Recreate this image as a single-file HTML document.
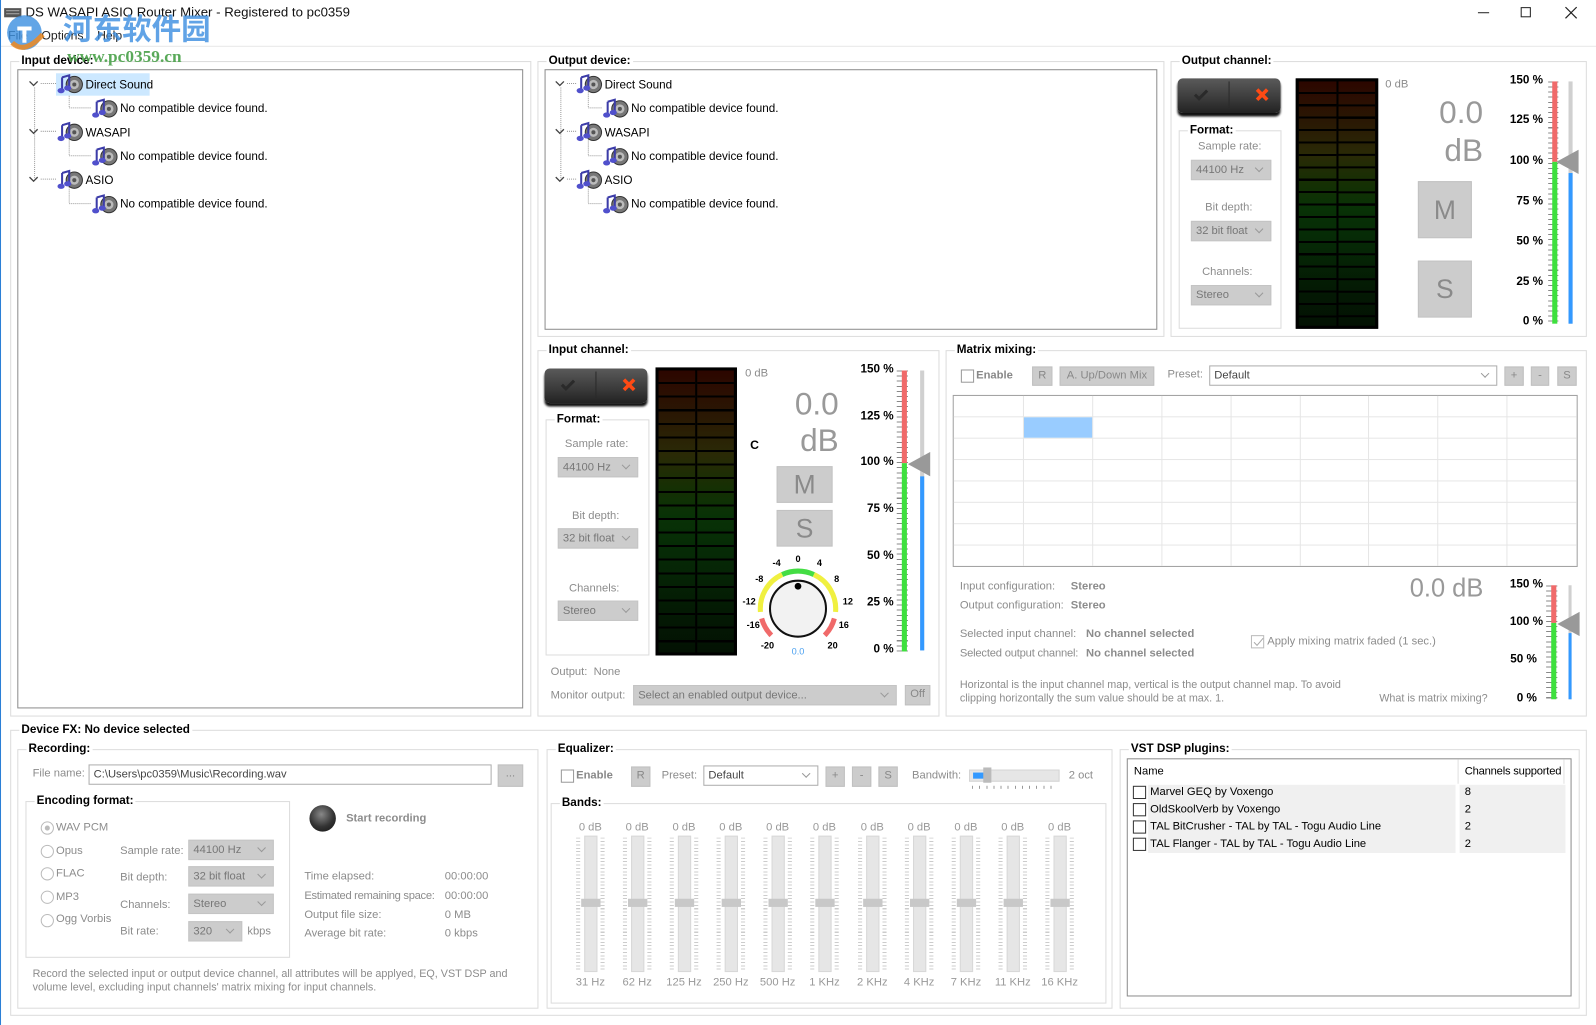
<!DOCTYPE html>
<html><head><meta charset="utf-8"><style>
*{margin:0;padding:0;box-sizing:border-box}
html,body{width:1596px;height:1025px;overflow:hidden;background:#fff}
#w{position:absolute;left:0;top:0;width:1568px;height:1007px;transform:scale(1.01786);transform-origin:0 0;font-family:"Liberation Sans","Noto Sans CJK SC",sans-serif;font-size:11px;color:#000}
.a{position:absolute;white-space:nowrap}
.g{position:absolute;border:1px solid #dcdcdc}
.gl{position:absolute;top:-8px;left:8px;background:#fff;padding:0 2px;font-weight:bold;font-size:11.5px;line-height:14px}
.gr{color:#8c8c8c}
.sel{position:absolute;background:#cccccc;border:1px solid #c4c4c4;color:#777;padding-left:4px;line-height:18px;height:20px;font-size:11px}
.sel:after{content:"";position:absolute;right:8px;top:4px;width:5px;height:5px;border-right:1px solid #999;border-bottom:1px solid #999;transform:rotate(45deg)}
.ws{background:#fff;border:1px solid #adadad;color:#444}
.ws:after{display:none}.sel.ws.p:after{display:block}
.b{position:absolute;background:#ccc;border:1px solid #c0c0c0;color:#888;text-align:center;font-size:11px;line-height:17px}
.cb{position:absolute;width:13px;height:13px;border:1px solid #999;background:#fff}
.rd{position:absolute;width:13px;height:13px;border:1px solid #bbb;border-radius:50%;background:#fff}
.tree{position:absolute;border:1px solid #8c8c8c;background:#fff}
.met{position:absolute;background:#000;border:3px solid #000}
.met i{position:absolute;top:0;bottom:0;width:calc(50% - 1px);background:repeating-linear-gradient(to bottom,transparent 0,transparent calc(var(--s) - 2px),#000 calc(var(--s) - 2px),#000 var(--s)),linear-gradient(to bottom,#2c0600,#2a1a04 18%,#2a2a06 30%,#153004 42%,#083206 52%,#062a06 65%,#041a04 85%,#031203)}
.tg{position:absolute;width:101px;height:34px;border-radius:5px;background:linear-gradient(#5a5a5a,#3a3a3a 60%,#222);box-shadow:0 3px 2px #111}
.tg:before{content:"";position:absolute;left:50px;top:3px;width:1px;height:27px;background:#2a2a2a}
.big{position:absolute;color:#999;font-size:31px;text-align:right;line-height:34px}
.ms{position:absolute;background:#ccc;border:1px solid #c2c2c2;color:#8a8a8a;font-size:26px;text-align:center}
.sl{position:absolute;font-weight:bold;font-size:11.5px;text-align:right}
.tk{position:absolute;background:repeating-linear-gradient(to bottom,#888 0,#888 1px,transparent 1px,transparent 5px)}
.eq{position:absolute;top:807px;width:46px;height:170px}
.eq .d{position:absolute;left:0;width:46px;top:0;text-align:center;color:#999;font-size:11px}
.eq .h{position:absolute;left:0;width:46px;top:152px;text-align:center;color:#999;font-size:11px}
.eq .tr{position:absolute;left:17px;top:14px;width:13px;height:134px;background:#e6e6e6;border:1px solid #d8d8d8}
.eq .th{position:absolute;left:14px;top:76px;width:19px;height:8px;background:#c8c8c8}
.eq .l,.eq .r{position:absolute;top:16px;width:4px;height:130px;background:repeating-linear-gradient(to bottom,#ccc 0,#ccc 1px,transparent 1px,transparent 3.3px)}
.eq .l{left:9px}.eq .r{left:33px}
.vc{position:absolute;top:389px;width:1px;height:167px;background:#e6e6e6}
.hr{position:absolute;left:937px;width:612px;height:1px;background:#e6e6e6}
</style></head><body><div id="w">

<!-- title -->
<svg class="a" style="left:4px;top:7px" width="18" height="12"><rect x="0" y="1" width="17" height="9" fill="#555"/><rect x="2" y="3" width="13" height="1" fill="#aaa"/><rect x="2" y="6" width="13" height="1" fill="#aaa"/></svg>
<div class="a" style="left:25px;top:4px;font-size:13px;color:#111">DS WASAPI ASIO Router Mixer - Registered to pc0359</div>
<div class="a" style="left:1452px;top:12px;width:11px;height:1px;background:#222"></div>
<div class="a" style="left:1494px;top:7px;width:10px;height:10px;border:1px solid #222"></div>
<svg class="a" style="left:1537px;top:6px" width="13" height="13"><path d="M1 1L12 12M12 1L1 12" stroke="#222" stroke-width="1.2"/></svg>
<div class="a" style="left:8px;top:28px;font-size:12px;color:#222">File&nbsp;&nbsp;&nbsp;&nbsp;Options&nbsp;&nbsp;&nbsp;&nbsp;Help</div>
<div class="a" style="left:0;top:45px;width:1568px;height:1px;background:#e8e8e8"></div>
<div class="a" style="left:0;top:0;width:1px;height:1007px;background:#2b7fd6"></div>

<!-- Input device -->
<div class="g" style="left:10px;top:60px;width:512px;height:644px"><div class="gl">Input device:</div></div>
<div class="tree" style="left:17px;top:68px;width:497px;height:628px"></div>
<!-- Output device -->
<div class="g" style="left:528px;top:60px;width:616px;height:271px"><div class="gl">Output device:</div></div>
<div class="tree" style="left:535px;top:68px;width:602px;height:256px"></div>

<svg class="a" style="left:0;top:60px" width="1200" height="160" font-family="Liberation Sans" font-size="11.5">
<defs><g id="ic"><circle cx="16" cy="12" r="8" fill="#777" stroke="#333"/><circle cx="16" cy="12" r="4.5" fill="#bbb"/><circle cx="16" cy="12" r="2" fill="#555"/><path d="M4 5L11 3L11 15M4 5L4 18" stroke="#3c3ca8" stroke-width="2" fill="none"/><ellipse cx="3" cy="18" rx="3.5" ry="2.6" fill="#5050cc"/><ellipse cx="9.5" cy="15.5" rx="3.5" ry="2.6" fill="#5050cc"/></g>
<path id="ch" d="M0 0l4 4 4-4" stroke="#444" fill="none" stroke-width="1.3"/></defs>
<g stroke="#999" stroke-dasharray="1 1" fill="none">
<path d="M34 26V116M40 22H56M68 30V46H90M40 69H56M68 77V93H90M40 116H56M68 124V140H90"/>
<path d="M551 26V116M557 22H566M578 30V46H592M557 69H566M578 77V93H592M557 116H566M578 124V140H592"/></g>
<rect x="55" y="12" width="92" height="22" fill="#cce8ff"/>
<use href="#ch" x="29" y="20"/><use href="#ch" x="29" y="67"/><use href="#ch" x="29" y="114"/>
<use href="#ch" x="546" y="20"/><use href="#ch" x="546" y="67"/><use href="#ch" x="546" y="114"/>
<use href="#ic" x="57" y="11"/><use href="#ic" x="91" y="35"/><use href="#ic" x="57" y="58"/><use href="#ic" x="91" y="82"/><use href="#ic" x="57" y="105"/><use href="#ic" x="91" y="129"/>
<use href="#ic" x="567" y="11"/><use href="#ic" x="593" y="35"/><use href="#ic" x="567" y="58"/><use href="#ic" x="593" y="82"/><use href="#ic" x="567" y="105"/><use href="#ic" x="593" y="129"/>
<text x="84" y="27">Direct Sound</text><text x="118" y="50">No compatible device found.</text><text x="84" y="74">WASAPI</text><text x="118" y="97">No compatible device found.</text><text x="84" y="121">ASIO</text><text x="118" y="144">No compatible device found.</text>
<text x="594" y="27">Direct Sound</text><text x="620" y="50">No compatible device found.</text><text x="594" y="74">WASAPI</text><text x="620" y="97">No compatible device found.</text><text x="594" y="121">ASIO</text><text x="620" y="144">No compatible device found.</text>
</svg>

<!-- Output channel -->
<div class="g" style="left:1150px;top:60px;width:409px;height:271px"><div class="gl">Output channel:</div></div>
<div class="tg" style="left:1157px;top:77px"></div>
<svg class="a" style="left:1157px;top:77px" width="101" height="34"><path d="M17 16l4 4 8-8" stroke="#2a2a2a" stroke-width="3" fill="none"/><path d="M78 11l10 10M88 11l-10 10" stroke="#ff4a14" stroke-width="3.5"/></svg>
<div class="g" style="left:1158px;top:128px;width:101px;height:195px"><div class="gl">Format:</div></div>
<div class="a gr" style="left:1177px;top:138px">Sample rate:</div>
<div class="sel" style="left:1170px;top:157px;width:79px">44100 Hz</div>
<div class="a gr" style="left:1184px;top:198px">Bit depth:</div>
<div class="sel" style="left:1170px;top:217px;width:79px">32 bit float</div>
<div class="a gr" style="left:1181px;top:261px">Channels:</div>
<div class="sel" style="left:1170px;top:280px;width:79px">Stereo</div>
<div class="met" style="left:1273px;top:77px;width:81px;height:246px;--s:12.2px"><i style="left:0"></i><i style="right:0"></i></div>
<div class="a gr" style="left:1361px;top:77px;font-size:11px">0 dB</div>
<div class="big" style="left:1380px;top:94px;width:77px">0.0</div>
<div class="big" style="left:1380px;top:131px;width:77px">dB</div>
<div class="ms" style="left:1393px;top:178px;width:53px;height:56px;line-height:54px">M</div>
<div class="ms" style="left:1393px;top:256px;width:53px;height:56px;line-height:54px">S</div>
<div class="sl" style="left:1470px;top:73px;width:46px">150 %</div>
<div class="sl" style="left:1470px;top:112px;width:46px">125 %</div>
<div class="sl" style="left:1470px;top:152px;width:46px">100 %</div>
<div class="sl" style="left:1470px;top:192px;width:46px">75 %</div>
<div class="sl" style="left:1470px;top:231px;width:46px">50 %</div>
<div class="sl" style="left:1470px;top:271px;width:46px">25 %</div>
<div class="sl" style="left:1470px;top:310px;width:46px">0 %</div>
<div class="tk" style="left:1521px;top:80px;width:10px;height:238px"></div>
<div class="a" style="left:1525px;top:80px;width:5px;height:79px;background:#f06a6a"></div>
<div class="a" style="left:1525px;top:159px;width:5px;height:159px;background:#3ee03e"></div>
<div class="a" style="left:1541px;top:80px;width:4px;height:238px;background:#d0d0d0"></div>
<div class="a" style="left:1541px;top:170px;width:4px;height:148px;background:#3399ff"></div>
<svg class="a" style="left:1529px;top:147px" width="22" height="24"><path d="M0 12L22 0V24Z" fill="#999"/></svg>

<!-- Input channel -->
<div class="g" style="left:528px;top:344px;width:395px;height:360px"><div class="gl">Input channel:</div></div>
<div class="tg" style="left:535px;top:362px"></div>
<svg class="a" style="left:535px;top:362px" width="101" height="34"><path d="M17 16l4 4 8-8" stroke="#2a2a2a" stroke-width="3" fill="none"/><path d="M78 11l10 10M88 11l-10 10" stroke="#ff4a14" stroke-width="3.5"/></svg>
<div class="g" style="left:536px;top:412px;width:102px;height:232px"><div class="gl">Format:</div></div>
<div class="a gr" style="left:555px;top:430px">Sample rate:</div>
<div class="sel" style="left:548px;top:449px;width:79px">44100 Hz</div>
<div class="a gr" style="left:562px;top:501px">Bit depth:</div>
<div class="sel" style="left:548px;top:519px;width:79px">32 bit float</div>
<div class="a gr" style="left:559px;top:572px">Channels:</div>
<div class="sel" style="left:548px;top:590px;width:79px">Stereo</div>
<div class="met" style="left:644px;top:361px;width:80px;height:283px;--s:13.35px"><i style="left:0"></i><i style="right:0"></i></div>
<div class="a gr" style="left:732px;top:361px;font-size:11px">0 dB</div>
<div class="big" style="left:750px;top:380px;width:74px">0.0</div>
<div class="big" style="left:750px;top:416px;width:74px">dB</div>
<div class="a" style="left:737px;top:430px;font-weight:bold;font-size:12px">C</div>
<div class="ms" style="left:763px;top:458px;width:55px;height:36px;line-height:34px">M</div>
<div class="ms" style="left:763px;top:501px;width:55px;height:36px;line-height:34px">S</div>
<svg class="a" style="left:724px;top:545px" width="120" height="100" font-family="Liberation Sans" font-size="9" font-weight="bold" text-anchor="middle">
<g transform="translate(10 0)">
<g fill="none" stroke-width="5"><path d="M34.4 19.5A37 37 0 0 1 65.6 19.5" stroke="#44dd44"/><path d="M65.6 19.5A37 37 0 0 1 86.9 56.2M34.4 19.5A37 37 0 0 0 13.1 56.2" stroke="#f0f040"/><path d="M85.7 62.6A37 37 0 0 1 76.2 79.2M14.3 62.6A37 37 0 0 0 23.8 79.2" stroke="#f06a6a"/></g>
<circle cx="50" cy="53" r="27.5" fill="#f2f2f2" stroke="#111" stroke-width="2"/><circle cx="50" cy="31" r="3.3" fill="#000"/>
<text x="50" y="7">0</text><text x="29" y="11">-4</text><text x="71" y="11">4</text><text x="12" y="27">-8</text><text x="88" y="27">8</text><text x="2" y="49">-12</text><text x="99" y="49">12</text><text x="6" y="72">-16</text><text x="95" y="72">16</text><text x="20" y="92">-20</text><text x="84" y="92">20</text>
<text x="50" y="98" fill="#4aa0f0" font-weight="normal">0.0</text></g></svg>
<div class="sl" style="left:830px;top:357px;width:48px">150 %</div>
<div class="sl" style="left:830px;top:403px;width:48px">125 %</div>
<div class="sl" style="left:830px;top:448px;width:48px">100 %</div>
<div class="sl" style="left:830px;top:494px;width:48px">75 %</div>
<div class="sl" style="left:830px;top:540px;width:48px">50 %</div>
<div class="sl" style="left:830px;top:586px;width:48px">25 %</div>
<div class="sl" style="left:830px;top:632px;width:48px">0 %</div>
<div class="tk" style="left:881px;top:364px;width:11px;height:276px"></div>
<div class="a" style="left:886px;top:364px;width:5px;height:91px;background:#f06a6a"></div>
<div class="a" style="left:886px;top:455px;width:5px;height:185px;background:#3ee03e"></div>
<div class="a" style="left:904px;top:364px;width:4px;height:275px;background:#d0d0d0"></div>
<div class="a" style="left:904px;top:468px;width:4px;height:171px;background:#3399ff"></div>
<svg class="a" style="left:892px;top:444px" width="22" height="24"><path d="M0 12L22 0V24Z" fill="#999"/></svg>
<div class="a gr" style="left:541px;top:654px">Output:&nbsp; None</div>
<div class="a gr" style="left:541px;top:677px">Monitor output:</div>
<div class="sel" style="left:622px;top:673px;width:259px">Select an enabled output device...</div>
<div class="b" style="left:889px;top:673px;width:25px;height:20px">Off</div>

<!-- Matrix -->
<div class="g" style="left:929px;top:344px;width:630px;height:360px"><div class="gl">Matrix mixing:</div></div>
<div class="cb" style="left:944px;top:363px"></div><div class="a gr" style="left:959px;top:363px;font-weight:bold;color:#888">Enable</div>
<div class="b" style="left:1014px;top:360px;width:20px;height:19px">R</div>
<div class="b" style="left:1041px;top:360px;width:93px;height:19px">A. Up/Down Mix</div>
<div class="a gr" style="left:1147px;top:362px">Preset:</div>
<div class="sel ws p" style="left:1188px;top:359px;width:283px">Default</div>
<div class="b" style="left:1478px;top:360px;width:19px;height:19px">+</div>
<div class="b" style="left:1504px;top:360px;width:18px;height:19px">-</div>
<div class="b" style="left:1530px;top:360px;width:19px;height:19px">S</div>
<div class="a" style="left:936px;top:388px;width:614px;height:169px;border:1px solid #a0a0a0;background:#fff"></div>
<div class="hr" style="top:409px"></div><div class="hr" style="top:430px"></div><div class="hr" style="top:451px"></div><div class="hr" style="top:472px"></div><div class="hr" style="top:493px"></div><div class="hr" style="top:514px"></div><div class="hr" style="top:535px"></div>
<div class="vc" style="left:1005px"></div><div class="vc" style="left:1073px"></div><div class="vc" style="left:1141px"></div><div class="vc" style="left:1209px"></div><div class="vc" style="left:1277px"></div><div class="vc" style="left:1344px"></div><div class="vc" style="left:1412px"></div><div class="vc" style="left:1480px"></div>
<div class="a" style="left:1006px;top:410px;width:67px;height:20px;background:#99ccff"></div>
<div class="a gr" style="left:943px;top:570px">Input configuration:</div><div class="a gr" style="left:1052px;top:570px;font-weight:bold">Stereo</div>
<div class="a gr" style="left:943px;top:589px">Output configuration:</div><div class="a gr" style="left:1052px;top:589px;font-weight:bold">Stereo</div>
<div class="a gr" style="left:943px;top:617px">Selected input channel:</div><div class="a gr" style="left:1067px;top:617px;font-weight:bold">No channel selected</div>
<div class="a gr" style="left:943px;top:636px;letter-spacing:-.2px">Selected output channel:</div><div class="a gr" style="left:1067px;top:636px;font-weight:bold">No channel selected</div>
<div class="cb" style="left:1229px;top:624px;border-color:#bbb"></div>
<svg class="a" style="left:1230px;top:625px" width="12" height="12"><path d="M2 6l3 3 6-7" stroke="#aaa" fill="none"/></svg>
<div class="a gr" style="left:1245px;top:624px">Apply mixing matrix faded (1 sec.)</div>
<div class="a" style="left:1385px;top:564px;font-size:25px;color:#999">0.0 dB</div>
<div class="a gr" style="left:943px;top:667px;font-size:10.6px">Horizontal is the input channel map, vertical is the output channel map. To avoid</div>
<div class="a gr" style="left:943px;top:680px;font-size:10.6px">clipping horizontally the sum value should be at max. 1.</div>
<div class="a gr" style="left:1355px;top:680px;font-size:10.6px">What is matrix mixing?</div>
<div class="sl" style="left:1468px;top:568px;width:48px">150 %</div>
<div class="sl" style="left:1468px;top:605px;width:48px">100 %</div>
<div class="sl" style="left:1468px;top:642px;width:42px">50 %</div>
<div class="sl" style="left:1468px;top:680px;width:42px">0 %</div>
<div class="tk" style="left:1519px;top:575px;width:11px;height:112px"></div>
<div class="a" style="left:1524px;top:575px;width:5px;height:37px;background:#f06a6a"></div>
<div class="a" style="left:1524px;top:612px;width:5px;height:75px;background:#3ee03e"></div>
<div class="a" style="left:1541px;top:575px;width:3px;height:112px;background:#d0d0d0"></div>
<div class="a" style="left:1541px;top:622px;width:3px;height:65px;background:#3399ff"></div>
<svg class="a" style="left:1530px;top:601px" width="22" height="24"><path d="M0 12L22 0V24Z" fill="#999"/></svg>

<!-- Device FX -->
<div class="g" style="left:10px;top:717px;width:1549px;height:281px"><div class="gl">Device FX: No device selected</div></div>
<div class="g" style="left:17px;top:736px;width:512px;height:255px"><div class="gl">Recording:</div></div>
<div class="a gr" style="left:32px;top:754px">File name:</div>
<div class="sel ws" style="left:87px;top:751px;width:396px;background:#fff">C:\Users\pc0359\Music\Recording.wav</div>
<div class="b" style="left:489px;top:751px;width:25px;height:22px">...</div>
<div class="g" style="left:25px;top:787px;width:260px;height:154px"><div class="gl">Encoding format:</div></div>
<div class="rd" style="left:40px;top:807px"><div style="position:absolute;left:3px;top:3px;width:5px;height:5px;border-radius:50%;background:#bbb"></div></div><div class="a gr" style="left:55px;top:807px">WAV PCM</div>
<div class="rd" style="left:40px;top:830px"></div><div class="a gr" style="left:55px;top:830px">Opus</div>
<div class="rd" style="left:40px;top:852px"></div><div class="a gr" style="left:55px;top:852px">FLAC</div>
<div class="rd" style="left:40px;top:875px"></div><div class="a gr" style="left:55px;top:875px">MP3</div>
<div class="rd" style="left:40px;top:898px"></div><div class="a gr" style="left:55px;top:897px">Ogg Vorbis</div>
<div class="a gr" style="left:118px;top:830px">Sample rate:</div><div class="sel" style="left:185px;top:825px;width:84px">44100 Hz</div>
<div class="a gr" style="left:118px;top:856px">Bit depth:</div><div class="sel" style="left:185px;top:851px;width:84px">32 bit float</div>
<div class="a gr" style="left:118px;top:883px">Channels:</div><div class="sel" style="left:185px;top:878px;width:84px">Stereo</div>
<div class="a gr" style="left:118px;top:909px">Bit rate:</div><div class="sel" style="left:185px;top:905px;width:53px">320</div><div class="a gr" style="left:243px;top:909px">kbps</div>
<div class="a" style="left:304px;top:791px;width:26px;height:26px;border-radius:50%;background:radial-gradient(circle at 45% 35%,#888,#333 55%,#111)"></div>
<div class="a gr" style="left:340px;top:798px;font-weight:bold">Start recording</div>
<div class="a gr" style="left:299px;top:855px">Time elapsed:</div><div class="a gr" style="left:437px;top:855px">00:00:00</div>
<div class="a gr" style="left:299px;top:874px;letter-spacing:-.3px">Estimated remaining space:</div><div class="a gr" style="left:437px;top:874px">00:00:00</div>
<div class="a gr" style="left:299px;top:893px">Output file size:</div><div class="a gr" style="left:437px;top:893px">0 MB</div>
<div class="a gr" style="left:299px;top:911px">Average bit rate:</div><div class="a gr" style="left:437px;top:911px">0 kbps</div>
<div class="a gr" style="left:32px;top:951px;font-size:10.6px">Record the selected input or output device channel, all attributes will be applyed, EQ, VST DSP and</div>
<div class="a gr" style="left:32px;top:964px;font-size:10.6px">volume level, excluding input channels' matrix mixing for input channels.</div>

<!-- Equalizer -->
<div class="g" style="left:537px;top:736px;width:556px;height:255px"><div class="gl">Equalizer:</div></div>
<div class="cb" style="left:551px;top:756px"></div><div class="a gr" style="left:566px;top:756px;font-weight:bold;color:#888">Enable</div>
<div class="b" style="left:620px;top:753px;width:19px;height:20px">R</div>
<div class="a gr" style="left:650px;top:756px">Preset:</div>
<div class="sel ws p" style="left:691px;top:752px;width:113px">Default</div>
<div class="b" style="left:811px;top:753px;width:19px;height:20px">+</div>
<div class="b" style="left:837px;top:753px;width:19px;height:20px">-</div>
<div class="b" style="left:863px;top:753px;width:19px;height:20px">S</div>
<div class="a gr" style="left:896px;top:756px">Bandwith:</div>
<div class="a" style="left:952px;top:756px;width:89px;height:12px;background:#e6e6e6;border:1px solid #d4d4d4"></div>
<div class="a" style="left:956px;top:759px;width:12px;height:6px;background:#3399ff"></div>
<div class="a" style="left:966px;top:754px;width:8px;height:15px;background:#bbb"></div>
<div class="a" style="left:955px;top:772px;width:80px;height:3px;background:repeating-linear-gradient(to right,#999 0,#999 1px,transparent 1px,transparent 7px)"></div>
<div class="a gr" style="left:1050px;top:756px">2 oct</div>
<div class="g" style="left:541px;top:789px;width:546px;height:197px"><div class="gl">Bands:</div></div>
<div class="eq" style="left:557px"><div class="d">0 dB</div><div class="l"></div><div class="tr"></div><div class="r"></div><div class="th"></div><div class="h">31 Hz</div></div>
<div class="eq" style="left:603px"><div class="d">0 dB</div><div class="l"></div><div class="tr"></div><div class="r"></div><div class="th"></div><div class="h">62 Hz</div></div>
<div class="eq" style="left:649px"><div class="d">0 dB</div><div class="l"></div><div class="tr"></div><div class="r"></div><div class="th"></div><div class="h">125 Hz</div></div>
<div class="eq" style="left:695px"><div class="d">0 dB</div><div class="l"></div><div class="tr"></div><div class="r"></div><div class="th"></div><div class="h">250 Hz</div></div>
<div class="eq" style="left:741px"><div class="d">0 dB</div><div class="l"></div><div class="tr"></div><div class="r"></div><div class="th"></div><div class="h">500 Hz</div></div>
<div class="eq" style="left:787px"><div class="d">0 dB</div><div class="l"></div><div class="tr"></div><div class="r"></div><div class="th"></div><div class="h">1 KHz</div></div>
<div class="eq" style="left:834px"><div class="d">0 dB</div><div class="l"></div><div class="tr"></div><div class="r"></div><div class="th"></div><div class="h">2 KHz</div></div>
<div class="eq" style="left:880px"><div class="d">0 dB</div><div class="l"></div><div class="tr"></div><div class="r"></div><div class="th"></div><div class="h">4 KHz</div></div>
<div class="eq" style="left:926px"><div class="d">0 dB</div><div class="l"></div><div class="tr"></div><div class="r"></div><div class="th"></div><div class="h">7 KHz</div></div>
<div class="eq" style="left:972px"><div class="d">0 dB</div><div class="l"></div><div class="tr"></div><div class="r"></div><div class="th"></div><div class="h">11 KHz</div></div>
<div class="eq" style="left:1018px"><div class="d">0 dB</div><div class="l"></div><div class="tr"></div><div class="r"></div><div class="th"></div><div class="h">16 KHz</div></div>

<!-- VST -->
<div class="g" style="left:1100px;top:736px;width:452px;height:255px"><div class="gl">VST DSP plugins:</div></div>
<div class="a" style="left:1107px;top:745px;width:437px;height:234px;border:1px solid #8c8c8c;background:#fff"></div>
<div class="a" style="left:1432px;top:746px;width:1px;height:24px;background:#e0e0e0"></div>
<div class="a" style="left:1536px;top:746px;width:1px;height:24px;background:#e0e0e0"></div>
<div class="a" style="left:1114px;top:752px">Name</div>
<div class="a" style="left:1439px;top:752px;letter-spacing:-.2px">Channels supported</div>
<div class="a" style="left:1128px;top:771px;width:302px;height:67px;background:#f0f0f0"></div>
<div class="a" style="left:1434px;top:771px;width:104px;height:67px;background:#f0f0f0"></div>
<div class="cb" style="left:1113px;top:772px;background:none;border-color:#333"></div><div class="a" style="left:1130px;top:772px">Marvel GEQ by Voxengo</div><div class="a" style="left:1439px;top:772px">8</div>
<div class="cb" style="left:1113px;top:789px;background:none;border-color:#333"></div><div class="a" style="left:1130px;top:789px">OldSkoolVerb by Voxengo</div><div class="a" style="left:1439px;top:789px">2</div>
<div class="cb" style="left:1113px;top:806px;background:none;border-color:#333"></div><div class="a" style="left:1130px;top:806px">TAL BitCrusher - TAL by TAL - Togu Audio Line</div><div class="a" style="left:1439px;top:806px">2</div>
<div class="cb" style="left:1113px;top:823px;background:none;border-color:#333"></div><div class="a" style="left:1130px;top:823px">TAL Flanger - TAL by TAL - Togu Audio Line</div><div class="a" style="left:1439px;top:823px">2</div>

<!-- watermark (on top) -->
<svg class="a" style="left:4px;top:12px" width="44" height="40"><circle cx="20" cy="20" r="17" fill="#3b8ee0" opacity=".8"/><path d="M8 30 Q20 42 38 22" stroke="#f08a1e" stroke-width="5" fill="none" opacity=".85"/><path d="M13 14h14v4h-5v12h-4V18h-5z" fill="#fff"/></svg>
<div class="a" style="left:62px;top:10px;font-size:29px;font-weight:bold;color:#3a8de0;opacity:.8;font-family:'Noto Sans CJK SC',sans-serif;line-height:34px">河东软件园</div>
<div class="a" style="left:66px;top:46px;font-size:17px;font-weight:bold;color:#48a048;opacity:.9;font-family:'Liberation Serif',serif">www.pc0359.cn</div>

</div></body></html>
